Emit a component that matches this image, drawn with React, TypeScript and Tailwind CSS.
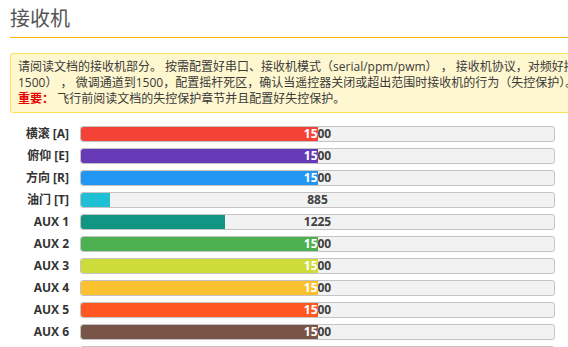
import React from "react";

const rows: { label: string; value: number; color: string }[] = [
  { label: "横滚 [A]", value: 1500, color: "#f44336" },
  { label: "俯仰 [E]", value: 1500, color: "#673ab7" },
  { label: "方向 [R]", value: 1500, color: "#2196f3" },
  { label: "油门 [T]", value: 885, color: "#1fbfd6" },
  { label: "AUX 1", value: 1225, color: "#129582" },
  { label: "AUX 2", value: 1500, color: "#4caf50" },
  { label: "AUX 3", value: 1500, color: "#cddc39" },
  { label: "AUX 4", value: 1500, color: "#fbc02d" },
  { label: "AUX 5", value: 1500, color: "#ff5722" },
  { label: "AUX 6", value: 1500, color: "#795548" },
  { label: "AUX 7", value: 1500, color: "#9e9e9e" },
];

const BAR_INNER = 473;

function Bar({ value, color }: { value: number; color: string }) {
  const w = Math.max(0, Math.min(1, (value - 800) / 1400)) * BAR_INNER;
  return (
    <div className="relative h-4 w-[475px] rounded-[3px] border border-[#c4c4c4] bg-[#f2f2f2] overflow-hidden">
      <div className="absolute inset-0 flex items-center justify-center text-[12px] font-bold leading-none text-[#404040]">
        {value}
      </div>
      <div
        className="absolute left-0 top-0 bottom-0 overflow-hidden rounded-l-[2px]"
        style={{ width: `${w}px`, backgroundColor: color }}
      >
        <div className="flex h-full w-[473px] items-center justify-center text-[12px] font-bold leading-none text-white">
          {value}
        </div>
      </div>
    </div>
  );
}

export default function App() {
  return (
    <div
      className="relative h-[347px] w-[568px] overflow-hidden bg-white"
      style={{ fontFamily: "'Open Sans', 'Noto Sans CJK SC', sans-serif" }}
    >
      <div className="w-[640px] pl-[10px]">
        <div className="border-b border-[#ffbb00] pb-[6px] pt-[7px] text-[20px] leading-[24px] text-[#555]">
          接收机
        </div>
        <div className="mt-[15px] rounded-[3px] border border-[#ffe15a] bg-[#fff7cf] pb-[5px] pl-[7px] pt-[5px] text-[12px] leading-[16px] text-[#3a3a3a] whitespace-nowrap">
          <div>
            请阅读文档的接收机部分。 按需配置好串口、接收机模式（serial/ppm/pwm） ， 接收机协议，对频好接收机，设置通道映射（默认
          </div>
          <div>
            1500） ， 微调通道到1500，配置摇杆死区，确认当遥控器关闭或超出范围时接收机的行为（失控保护）。
          </div>
          <div>
            <span className="font-bold text-[#e60000]">重要：</span> 飞行前阅读文档的失控保护章节并且配置好失控保护。
          </div>
        </div>
        <div className="mt-[13px] flex flex-col gap-[6px]">
          {rows.map((r) => (
            <div key={r.label} className="flex items-center">
              <div className="w-[59px] text-right text-[12px] font-bold leading-4 text-[#333]">
                {r.label}
              </div>
              <div className="ml-[11px]">
                <Bar value={r.value} color={r.color} />
              </div>
            </div>
          ))}
        </div>
      </div>
    </div>
  );
}
